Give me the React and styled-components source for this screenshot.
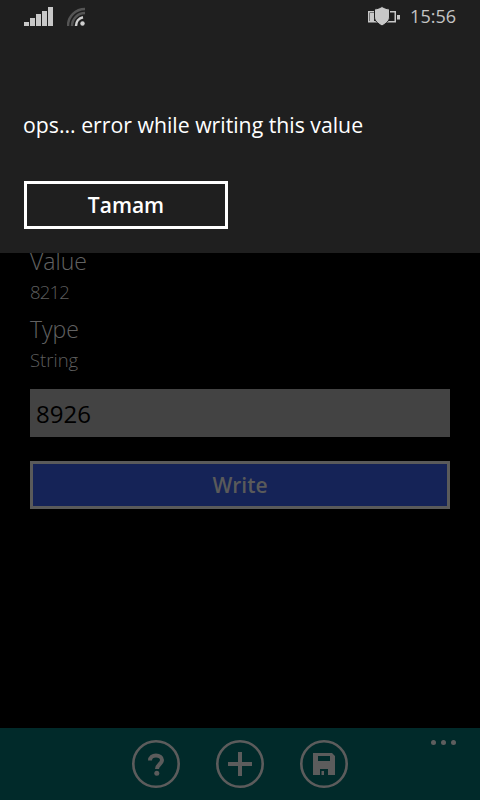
import React from "react";
import styled, { createGlobalStyle } from "styled-components";

const GlobalStyle = createGlobalStyle`
  html, body {
    margin: 0;
    padding: 0;
    background: #000000;
  }
  * {
    box-sizing: border-box;
  }
`;

const Page = styled.div`
  position: relative;
  width: 480px;
  height: 800px;
  display: flex;
  flex-direction: column;
  background: #000000;
  font-family: "Open Sans", "Noto Sans", sans-serif;
  overflow: hidden;
`;

const Dialog = styled.div`
  position: absolute;
  top: 0;
  left: 0;
  width: 480px;
  height: 253px;
  background: #1f1f1f;
  z-index: 2;
`;

const StatusBar = styled.div`
  height: 32px;
  display: flex;
  align-items: center;
  justify-content: space-between;
  padding: 0 24px;
`;

const StatusGroup = styled.div`
  display: flex;
  align-items: center;
  gap: ${(props) => props.$gap}px;
`;

const Clock = styled.span`
  font-size: 18px;
  color: #c4c4c4;
  line-height: 20px;
`;

const Message = styled.p`
  margin: 79px 0 0;
  padding-left: 23px;
  font-size: 21.25px;
  line-height: 28px;
  color: #ffffff;
  white-space: nowrap;
`;

const OkButton = styled.button`
  display: block;
  margin: 42px 0 0 24px;
  width: 204px;
  height: 48px;
  background: transparent;
  border: 3px solid #ffffff;
  border-radius: 0;
  color: #ffffff;
  font-family: inherit;
  font-size: 21px;
  font-weight: 600;
  padding: 0;
`;

const Content = styled.main`
  flex: 1;
  padding: 246px 30px 0;
  display: flex;
  flex-direction: column;
`;

const Label = styled.div`
  font-size: 23px;
  font-weight: 300;
  line-height: 30px;
  color: #626262;
`;

const Value = styled.div`
  font-size: 18.5px;
  font-weight: 300;
  line-height: 24px;
  margin-top: 4px;
  margin-bottom: ${(props) => props.$after}px;
  letter-spacing: ${(props) => (props.$numeric ? "-0.8px" : "0")};
  color: #5e5e5e;
`;

const ValueInput = styled.input`
  display: block;
  width: 420px;
  height: 48px;
  margin-top: 17px;
  border: none;
  border-radius: 0;
  outline: none;
  background: #434343;
  color: #000000;
  font-family: inherit;
  font-size: 24px;
  padding: 0 6px;
`;

const WriteButton = styled.button`
  display: block;
  width: 420px;
  height: 48px;
  margin-top: 24px;
  background: #152357;
  border: 3px solid #5a5a5a;
  border-radius: 0;
  color: #5a5a5a;
  font-family: inherit;
  font-size: 21px;
  font-weight: 600;
  padding: 0;
`;

const AppBar = styled.footer`
  position: relative;
  height: 72px;
  background: #012a2a;
  display: flex;
  justify-content: center;
  gap: 36px;
  padding: 12px 0 0;
`;

const RoundIcon = styled.svg`
  display: block;
  width: 48px;
  height: 48px;
`;

const MoreDots = styled.div`
  position: absolute;
  top: 12px;
  right: 24px;
  display: flex;
  gap: 5px;
`;

const Dot = styled.span`
  width: 5px;
  height: 5px;
  border-radius: 50%;
  background: #5e5e5e;
`;

const SignalIcon = () => (
  <svg width="30" height="20" viewBox="0 0 30 20">
    <rect x="0" y="16" width="5" height="4" fill="#c8c8c8" />
    <rect x="6" y="12" width="5" height="8" fill="#c8c8c8" />
    <rect x="12" y="8" width="5" height="12" fill="#c8c8c8" />
    <rect x="18" y="5" width="5" height="15" fill="#c8c8c8" />
    <rect x="24" y="1" width="5" height="19" fill="#c8c8c8" />
  </svg>
);

const WifiIcon = () => (
  <svg width="18" height="20" viewBox="0 0 18 20" fill="none">
    <path d="M1 20 A17 17 0 0 1 18 3" stroke="#555555" strokeWidth="2.5" />
    <path d="M5 20 A13 13 0 0 1 18 7" stroke="#555555" strokeWidth="2.5" />
    <path d="M9 20 A9 9 0 0 1 16 11.2" stroke="#d0d0d0" strokeWidth="2.5" />
    <circle cx="15.5" cy="17.5" r="2.2" fill="#d0d0d0" />
  </svg>
);

const BatteryShieldIcon = () => (
  <svg width="32" height="20" viewBox="0 0 32 20" fill="none">
    <rect x="0.75" y="5.75" width="26.5" height="10" stroke="#c8c8c8" strokeWidth="1.5" />
    <rect x="2" y="7" width="4" height="8" fill="#c8c8c8" />
    <rect x="29" y="9" width="3" height="4.5" fill="#c8c8c8" />
    <path
      d="M14 0.5 C16.5 2 18.5 2.7 21.5 3 L21.5 11 C21.5 15 18 17.5 14 20 C10 17.5 6.5 15 6.5 11 L6.5 3 C9.5 2.7 11.5 2 14 0.5 Z"
      fill="#c8c8c8"
      stroke="#1f1f1f"
      strokeWidth="1"
    />
  </svg>
);

const HelpIcon = () => (
  <RoundIcon viewBox="0 0 48 48" fill="none">
    <circle cx="24" cy="24" r="22.7" stroke="#5c5c5c" strokeWidth="2.6" />
    <path
      d="M18 20.5 C18 17.5 20.5 15.5 24 15.5 C27.5 15.5 30 17.5 30 20 C30 24 25 24.5 25 29"
      stroke="#5c5c5c"
      strokeWidth="4"
    />
    <circle cx="24.8" cy="33.2" r="2.5" fill="#5c5c5c" />
  </RoundIcon>
);

const AddIcon = () => (
  <RoundIcon viewBox="0 0 48 48" fill="none">
    <circle cx="24" cy="24" r="22.7" stroke="#5c5c5c" strokeWidth="2.6" />
    <path d="M24 12 V36 M12 24 H36" stroke="#5c5c5c" strokeWidth="4" />
  </RoundIcon>
);

const SaveIcon = () => (
  <RoundIcon viewBox="0 0 48 48" fill="none">
    <circle cx="24" cy="24" r="22.7" stroke="#5c5c5c" strokeWidth="2.6" />
    <path
      fillRule="evenodd"
      d="M13 13 H32 L35 16 V35 H13 Z M18 16 V21 H30 V16 Z M20 29 V35 H28 V29 Z"
      fill="#5c5c5c"
    />
    <rect x="21.5" y="31" width="2.5" height="4" fill="#5c5c5c" />
  </RoundIcon>
);

const App = () => {
  return (
    <>
      <GlobalStyle />
      <Page>
        <Dialog>
          <StatusBar>
            <StatusGroup $gap={13}>
              <SignalIcon />
              <WifiIcon />
            </StatusGroup>
            <StatusGroup $gap={10}>
              <BatteryShieldIcon />
              <Clock>15:56</Clock>
            </StatusGroup>
          </StatusBar>
          <Message>ops... error while writing this value</Message>
          <OkButton>Tamam</OkButton>
        </Dialog>
        <Content>
          <Label>Value</Label>
          <Value $after={10} $numeric>
            8212
          </Value>
          <Label>Type</Label>
          <Value $after={0}>String</Value>
          <ValueInput defaultValue="8926" />
          <WriteButton>Write</WriteButton>
        </Content>
        <AppBar>
          <HelpIcon />
          <AddIcon />
          <SaveIcon />
          <MoreDots>
            <Dot />
            <Dot />
            <Dot />
          </MoreDots>
        </AppBar>
      </Page>
    </>
  );
};

export default App;
